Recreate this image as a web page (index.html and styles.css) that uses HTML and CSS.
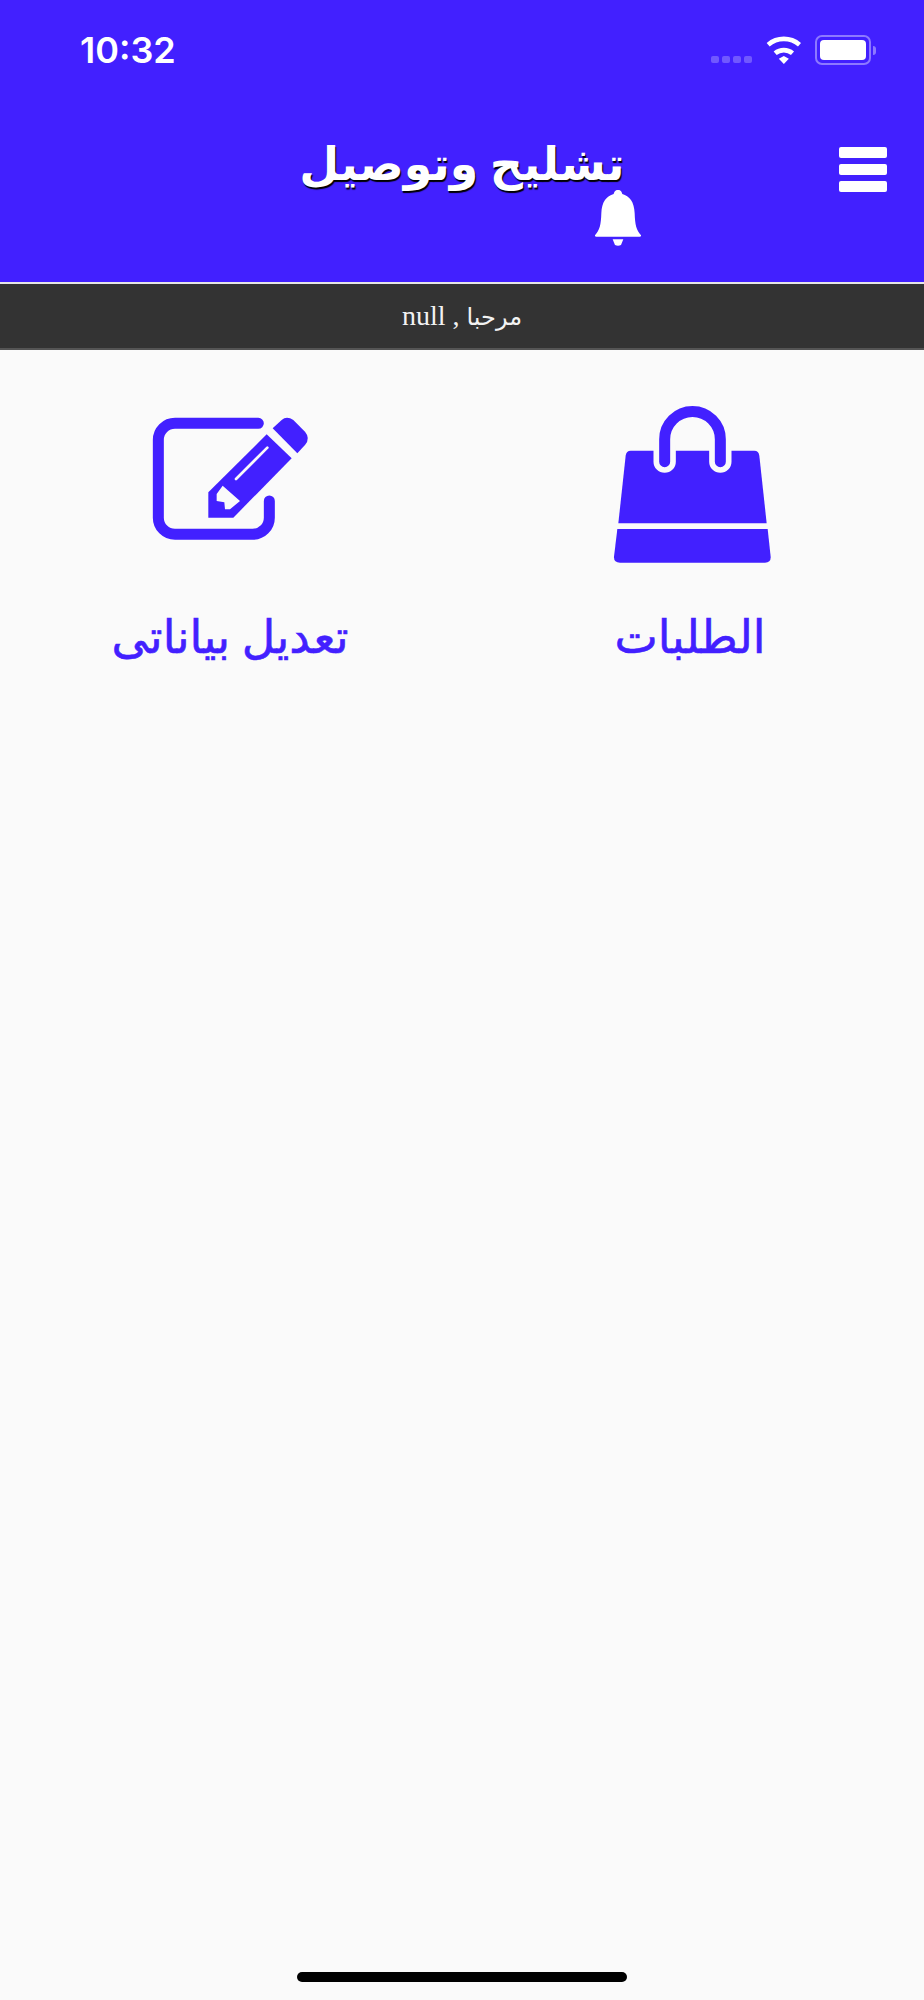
FILE: index.html
```html
<!DOCTYPE html>
<html lang="ar">
<head>
  <meta charset="UTF-8" />
  <meta name="viewport" content="width=device-width, initial-scale=1.0"/>
  <title>تشليح وتوصيل</title>
  <link rel="stylesheet" href="styles.css">
</head>
<body>
  <header class="top">
    <!-- Status bar -->
    <div class="status">
      <span class="time">10:32</span>
      <div class="status-icons">
        <div class="signal"><i></i><i></i><i></i><i></i></div>
        <svg class="wifi" viewBox="0 0 110 84">
          <path d="M6 26 A73 73 0 0 1 100 26" fill="none" stroke="#fff" stroke-width="14"/>
          <path d="M27 52 A40 40 0 0 1 79 52" fill="none" stroke="#fff" stroke-width="14"/>
          <path d="M38 68 L53 60 L68 68 L53 84 Z" fill="#fff"/>
        </svg>
        <div class="battery"><div class="battery-level"></div></div>
        <div class="battery-tip"></div>
      </div>
    </div>

    <!-- Title row -->
    <div class="nav">
      <div class="nav-title">
        <h1>تشليح وتوصيل</h1>
        <svg class="bell" viewBox="0 0 138 168">
          <path d="M69 0 C60 0 58 6 56 12 C35 18 20 35 19 70 C18 105 14 120 0 136 Q-1 140 4 140 H134 Q139 140 138 136 C124 120 120 105 119 70 C118 35 103 18 82 12 C80 6 78 0 69 0 Z" fill="#fff"/>
          <path d="M53 148 H85 L78 165 Q69 170 60 165 Z" fill="#fff"/>
        </svg>
      </div>
      <div class="menu"><i></i><i></i><i></i></div>
    </div>
  </header>

  <div class="welcome" dir="rtl"><span class="welcome-word">مرحبا</span> , null</div>

  <main class="tiles">
    <a class="tile">
      <svg class="tile-icon" viewBox="0 0 600 540">
        <path d="M385 85 H135 A50 50 0 0 0 85 135 V368 A50 50 0 0 0 135 418 H368 A50 50 0 0 0 418 368 V318" fill="none" stroke="#4220ff" stroke-width="33" stroke-linecap="round"/>
        <path d="M410 118 L485 190 L310 368 H235 V292 Z" fill="#4220ff"/>
        <path d="M428 100 L455 75 Q470 62 490 75 L525 110 Q542 130 525 150 L502 175 Z" fill="#4220ff"/>
        <path d="M278 272 L330 318 L300 343 H285 L283 322 L260 318 V297 Z" fill="#fafafa"/>
        <path d="M318 252 L412 158" stroke="#fafafa" stroke-width="8" stroke-linecap="round"/>
      </svg>
      <span>تعديل بياناتى</span>
    </a>
    <a class="tile">
      <svg class="tile-icon" viewBox="0 0 600 540">
        <path d="M122 167 H493 Q506 167 508 182 L530 385 H85 L107 182 Q109 167 122 167 Z" fill="#4220ff"/>
        <path d="M82 402 H533 L542 485 Q543 503 525 503 H90 Q71 503 72 485 Z" fill="#4220ff"/>
        <path d="M224 150 V200 M391 150 V200" fill="none" stroke="#fafafa" stroke-width="67" stroke-linecap="round"/>
        <path d="M224 200 V133 A83 83 0 0 1 391 133 V200" fill="none" stroke="#4220ff" stroke-width="33" stroke-linecap="round"/>
      </svg>
      <span>الطلبات</span>
    </a>
  </main>

  <div class="home-bar"></div>
</body>
</html>
```

FILE: styles.css
```css
html, body {
  height: 100%;
}

body {
  margin: 0;
  background: #fafafa;
  font-family: "Liberation Serif", "DejaVu Sans", serif;
  display: flex;
  flex-direction: column;
  min-height: 2000px;
  box-sizing: border-box;
}

.top {
  background: #4220ff;
  height: 282px;
  border-bottom: 2px solid #e6e6e6;
}

.status {
  display: flex;
  justify-content: space-between;
  align-items: center;
  height: 26px;
  padding: 37px 48px 0 80px;
}

.time {
  font-family: Inter, sans-serif;
  font-weight: 600;
  font-size: 36px;
  color: #fff;
}

.status-icons {
  display: flex;
  align-items: center;
}

.signal {
  display: flex;
  gap: 3px;
  margin-top: 19px;
  margin-right: 14px;
}

.signal i {
  width: 8px;
  height: 7px;
  border-radius: 2px;
  background: rgba(255,255,255,0.25);
}

.wifi {
  width: 37px;
  height: 28px;
  margin-right: 12px;
}

.battery {
  padding: 3px;
  border: 2px solid rgba(255,255,255,0.4);
  border-radius: 7px;
  width: 46px;
  height: 20px;
}

.battery-level {
  height: 100%;
  background: #fff;
  border-radius: 4px;
}

.battery-tip {
  width: 3px;
  height: 9px;
  margin-left: 2px;
  background: rgba(255,255,255,0.4);
  border-radius: 0 3px 3px 0;
}

.nav {
  display: flex;
  justify-content: center;
  position: relative;
  padding-top: 72px;
}

.nav-title {
  display: flex;
  flex-direction: column;
  align-items: flex-end;
}

h1 {
  margin: 0;
  font-size: 46px;
  line-height: 60px;
  font-weight: bold;
  color: #fff;
  text-shadow: 1px 2px 1px #000;
}

.bell {
  width: 46px;
  height: 56px;
  margin-top: -5px;
  margin-right: -16px;
}

.menu {
  position: absolute;
  right: 37px;
  top: 84px;
  display: flex;
  flex-direction: column;
  gap: 6px;
}

.menu i {
  display: block;
  width: 48px;
  height: 11px;
  background: #fff;
  border-radius: 2px;
}

.welcome {
  background: #333;
  height: 64px;
  line-height: 64px;
  border-bottom: 2px solid #555;
  text-align: center;
  font-size: 28px;
  color: #f2f2f2;
}

.welcome-word {
  font-size: 24px;
}

.tiles {
  display: grid;
  grid-template-columns: 1fr 1fr;
  padding: 45px 4px 0 0;
  flex: 1;
  align-content: start;
}

.tile {
  display: flex;
  flex-direction: column;
  align-items: center;
  color: #4220ff;
  font-size: 46px;
  -webkit-text-stroke: 0.6px #4220ff;
}

.tile-icon {
  width: 200px;
  height: 180px;
}

.tile span {
  margin-top: 35px;
}

.home-bar {
  width: 330px;
  height: 10px;
  border-radius: 5px;
  background: #000;
  margin: 0 auto 18px;
}
```
